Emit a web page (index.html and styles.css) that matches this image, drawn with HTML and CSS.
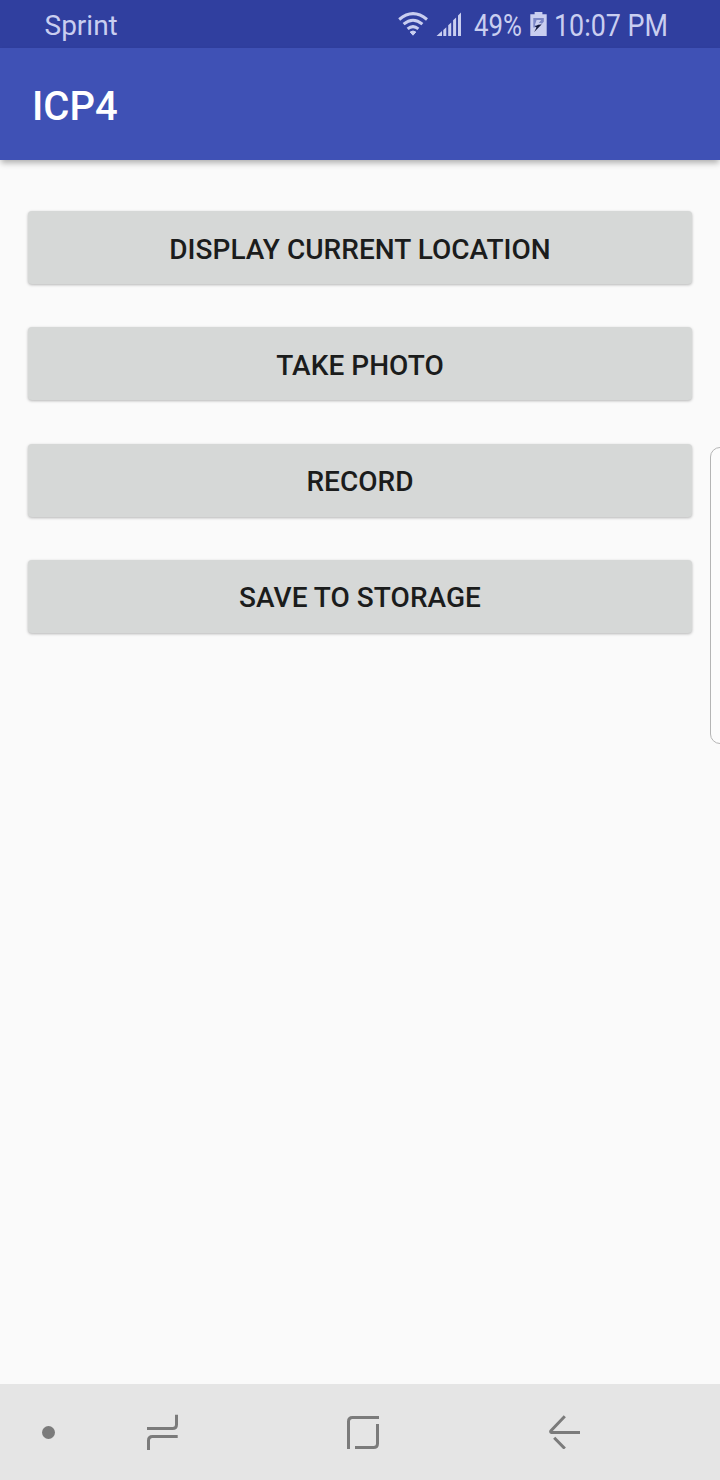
FILE: index.html
```html
<!DOCTYPE html>
<html lang="en">
<head>
<meta charset="utf-8">
<title>ICP4</title>
<link rel="stylesheet" href="styles.css">
</head>
<body>
<div class="screen">
  <header class="status">
    <span class="carrier">Sprint</span>
    <div class="indicators">
      <svg class="wifi" width="30" height="24" viewBox="398 12 30 24">
        <path d="M399.2 19.5Q413 7.8 427 19.5M403.6 24.2Q413 16.3 422.4 24.2M407.6 28.8Q413 24.4 418.4 28.8"/>
        <path class="solid" d="M410.2 32Q413 30 415.8 32L413 35.2Z"/>
      </svg>
      <svg class="signal" width="25" height="24" viewBox="437 12 25 24">
        <path d="M436.5 36L442 31V36ZM443.3 30L446.3 27.3V36H443.3ZM448.2 25.2L451.2 22.5V36H448.2ZM453.1 20.3L456.1 17.6V36H453.1ZM458 15.4L461 12.6V36H458Z"/>
      </svg>
      <svg class="percent" width="48" height="32"><text x="0" y="28" textLength="48" lengthAdjust="spacingAndGlyphs">49%</text></svg>
      <svg class="battery" width="17" height="24" viewBox="530 12 17 24">
        <path class="cell" d="M534.6 12H542.4V14.3H546.7V36H530.3V14.3H534.6Z"/>
        <path class="mark" d="M533.3 18H543.8V21.8L541.2 24.4H537.4L534.6 27.6H533.3Z"/>
        <path class="cell" d="M536.6 20H541.2L538.8 23H542L539 25.2H534.8Z"/>
        <path class="bolt" d="M541.6 24.4L534.2 32L536.5 27.4L534.8 26.6L538.2 24.8Z"/>
      </svg>
      <svg class="clock" width="112" height="32"><text x="-1" y="28" textLength="114" lengthAdjust="spacingAndGlyphs">10:07 PM</text></svg>
    </div>
  </header>
  <div class="appbar"><h1>ICP4</h1></div>
  <main class="actions">
    <button class="action">DISPLAY CURRENT LOCATION</button>
    <button class="action">TAKE PHOTO</button>
    <button class="action">RECORD</button>
    <button class="action">SAVE TO STORAGE</button>
  </main>
  <div class="edge-handle"></div>
  <nav class="navbar">
    <span class="dot"></span>
    <svg class="recents" width="32" height="36" viewBox="147 1414 32 36"><path d="M147 1428.5H172.5Q176.5 1428.5 176.5 1424.5V1414.8M177.7 1436.5H152.5Q148.5 1436.5 148.5 1440.5V1450"/></svg>
    <svg class="home" width="33" height="34" viewBox="347 1415 33 34"><path d="M348.5 1449V1421.5Q348.5 1417.5 352.5 1417.5H379M355 1447.5H373.5Q377.5 1447.5 377.5 1443.5V1424"/></svg>
    <svg class="back" width="32" height="34" viewBox="549 1415 32 34"><path d="M580 1432.5H551.8Q549.8 1432 551.2 1430.4L564.8 1416.3M554.2 1437.7L564.8 1448.6"/></svg>
  </nav>
</div>
</body>
</html>
```
FILE: styles.css
```css
* { box-sizing: border-box; }
body { margin: 0; font-family: Roboto, "Liberation Sans", sans-serif; }
.screen {
  position: relative;
  display: flex;
  flex-direction: column;
  width: 720px;
  height: 1480px;
  background: #fafafa;
  overflow: hidden;
}
.status {
  display: flex;
  justify-content: space-between;
  align-items: center;
  height: 48px;
  padding: 0 53px 0 44.5px;
  background: #303f9f;
  color: #c9cef0;
}
.carrier { font-size: 28px; line-height: 32px; padding-top: 4px; }
.indicators { display: flex; align-items: center; }
.indicators svg { display: block; fill: #c9cef0; overflow: visible; }
.indicators text { font-size: 30.5px; }
.indicators .wifi { fill: none; stroke: #c9cef0; stroke-width: 3; margin-right: 9px; }
.indicators .wifi .solid { fill: #c9cef0; stroke-width: 1; }
.signal { margin-right: 12px; }
.percent { margin-right: 8px; }
.battery { margin-right: 8px; }
.battery .mark { fill: #7b86c6; }
.battery .bolt { fill: #151b3d; }
.appbar {
  display: flex;
  align-items: center;
  height: 112px;
  padding: 6px 32px 0;
  background: #3f51b5;
  color: #fff;
  box-shadow: 0 4px 6px -1px rgba(0, 0, 0, .3);
}
.appbar h1 { margin: 0; font-size: 40px; font-weight: 500; line-height: 48px; }
.actions {
  display: flex;
  flex: 1;
  flex-direction: column;
  gap: 43.3px;
  padding: 51px 28px 0;
}
.action {
  height: 73px;
  padding: 4px 0 0;
  border: 0;
  border-radius: 4px;
  background: #d6d8d7;
  color: #1b1c1c;
  font: 500 28px/32px Roboto, "Liberation Sans", sans-serif;
  letter-spacing: .03px;
  box-shadow: 0 1px 3px rgba(0, 0, 0, .28);
}
.edge-handle {
  position: absolute;
  top: 447px;
  left: 710px;
  width: 20px;
  height: 297px;
  border: 1px solid #b5b5b5;
  border-radius: 10px;
  background: #fcfcfc;
}
.navbar {
  display: flex;
  align-items: center;
  height: 96px;
  padding-left: 42px;
  background: #e5e5e5;
}
.dot { width: 13px; height: 13px; border-radius: 50%; background: #7b7b7b; }
.navbar svg { fill: none; stroke: #7b7b7b; stroke-width: 3; }
.recents { margin-left: 92px; }
.home { margin-left: 168px; }
.back { margin-left: 169px; }
```
